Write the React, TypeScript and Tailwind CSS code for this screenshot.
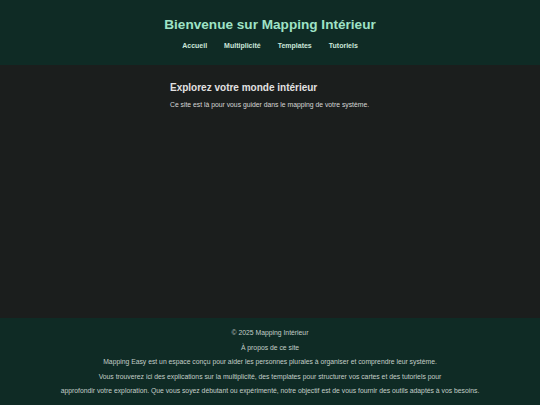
export default function App() {
  const nav = ['Accueil', 'Multiplicité', 'Templates', 'Tutoriels'];
  return (
    <div className="flex h-screen flex-col bg-[#1b1e1d] font-['Liberation_Sans',Arial,sans-serif]">
      {/* Header */}
      <header className="flex h-[65px] shrink-0 flex-col items-center bg-[#0f2b25] pt-[16px]">
        <h1 className="text-[13.6px] font-bold leading-[18px] text-[#9fe3c6]">Bienvenue sur Mapping Intérieur</h1>
        <nav className="mt-[7px] flex gap-[15px]">
          {nav.map((item) => (
            <a key={item} className="px-[1px] text-[7px] font-bold leading-[10px] text-[#cbe6da]">
              {item}
            </a>
          ))}
        </nav>
      </header>

      {/* Main */}
      <main className="flex-1">
        <div className="mx-auto w-[200px] pt-[16px]">
          <h2 className="text-[10px] font-bold leading-[14px] text-[#e2e2e2]">Explorez votre monde intérieur</h2>
          <p className="mt-[5px] text-[6.8px] leading-[10px] text-[#d6d6d6]">
            Ce site est là pour vous guider dans le mapping de votre système.
          </p>
        </div>
      </main>

      {/* Footer */}
      <footer className="flex h-[87px] shrink-0 flex-col items-center bg-[#0f2b25] pt-[8px] text-center text-[6.8px] leading-[14.5px] text-[#c3cec8]">
        <p>© 2025 Mapping Intérieur</p>
        <p>À propos de ce site</p>
        <p>Mapping Easy est un espace conçu pour aider les personnes plurales à organiser et comprendre leur système.</p>
        <p>
          Vous trouverez ici des explications sur la multiplicité, des templates pour structurer vos cartes et des tutoriels pour
          <br />
          approfondir votre exploration. Que vous soyez débutant ou expérimenté, notre objectif est de vous fournir des outils adaptés à vos besoins.
        </p>
      </footer>
    </div>
  );
}
